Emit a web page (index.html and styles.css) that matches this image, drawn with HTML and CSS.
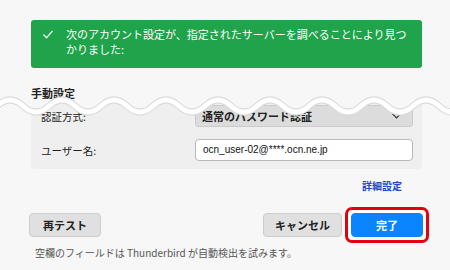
FILE: index.html
```html
<!DOCTYPE html>
<html>
<head>
  <title>アカウント設定</title>
  <link rel="stylesheet" href="styles.css">
</head>
<body>

  <div class="banner">
    <svg class="check" width="10" height="9" viewBox="0 0 10 9">
      <polyline points="0.5,4.5 3.5,7.8 9.5,0.8" fill="none" stroke="#fff" stroke-width="1.3"/>
    </svg>
    <p>次のアカウント設定が、指定されたサーバーを調べることにより見つかりました:</p>
  </div>

  <h2 class="section-title">手動設定</h2>

  <div class="lower">
    <div class="panel">
      <label>認証方式:</label>
      <div class="select">
        <span>通常のパスワード認証</span>
        <svg width="9" height="6" viewBox="0 0 9 6">
          <polyline points="0.5,0.8 4.5,4.8 8.5,0.8" fill="none" stroke="#333" stroke-width="1.2"/>
        </svg>
      </div>
      <label>ユーザー名:</label>
      <div class="text-input">ocn_user-02@****.ocn.ne.jp</div>
    </div>
  </div>

  <!-- torn edge drawn over the cut -->
  <svg class="tear" width="450" height="30" viewBox="0 0 450 30">
    <path d="M-3 16 Q10 4 23 16 T49 16 T75 16 T101 16 T127 16 T153 16 T179 16 T205 16 T231 16 T257 16 T283 16 T309 16 T335 16 T361 16 T387 16 T413 16 T439 16 T465 16" fill="none" stroke="#dadada" stroke-width="7"/>
    <path d="M-3 16 Q10 4 23 16 T49 16 T75 16 T101 16 T127 16 T153 16 T179 16 T205 16 T231 16 T257 16 T283 16 T309 16 T335 16 T361 16 T387 16 T413 16 T439 16 T465 16" fill="none" stroke="#fff" stroke-width="5"/>
  </svg>

  <div class="advanced">
    <a href="#">詳細設定</a>
  </div>

  <div class="buttons">
    <button class="btn">再テスト</button>
    <div class="spacer"></div>
    <button class="btn">キャンセル</button>
    <div class="highlight">
      <button class="btn primary">完了</button>
    </div>
  </div>

  <p class="note">空欄のフィールドは Thunderbird が自動検出を試みます。</p>

</body>
</html>
```

FILE: styles.css
```css
body {
  font-family: "Noto Sans CJK JP", "Liberation Sans", sans-serif;
  margin: 0;
  padding: 0;
  background-color: #f7f7f7;
  color: #222;
  width: 450px;
  height: 270px;
  overflow: hidden;
}

.banner {
  display: flex;
  align-items: flex-start;
  box-sizing: border-box;
  margin: 20px 28px 0 31px;
  height: 48px;
  padding: 7px 10px 0 12px;
  background-color: #1fa34b;
  border-radius: 3px;
  color: white;
}

.banner .check {
  margin-top: 3px;
  margin-right: 13px;
  flex-shrink: 0;
}

.banner p {
  margin: 0;
  font-size: 11px;
  line-height: 15px;
}

.section-title {
  margin: 18px 0 0 31px;
  font-size: 11px;
  line-height: 14px;
  font-weight: bold;
}

.lower {
  margin-top: -4px;
  background-color: #f7f7f7;
  clip-path: path('M-3 10 Q10 -2 23 10 T49 10 T75 10 T101 10 T127 10 T153 10 T179 10 T205 10 T231 10 T257 10 T283 10 T309 10 T335 10 T361 10 T387 10 T413 10 T439 10 T465 10 L465 200 L-3 200 Z');
}

.panel {
  display: grid;
  grid-template-columns: 154px 1fr;
  row-gap: 12px;
  align-items: center;
  margin: 0 28px 0 31px;
  padding: 9px 9px 8px 10px;
  background-color: #efefef;
  border-radius: 0 0 4px 4px;
}

.panel label {
  font-size: 10.5px;
  color: #222;
}

.select {
  display: flex;
  justify-content: space-between;
  align-items: center;
  box-sizing: border-box;
  height: 22px;
  padding: 0 11px 0 6px;
  background-color: #dcdcdc;
  border: 1px solid #cacaca;
  border-radius: 3px;
  font-size: 11px;
  font-weight: bold;
}

.text-input {
  box-sizing: border-box;
  height: 22px;
  padding: 0 7px;
  line-height: 20px;
  background-color: white;
  border: 1px solid #b8b8b8;
  border-radius: 4px;
  font-family: "Liberation Sans", sans-serif;
  font-size: 10px;
  color: #111;
}

.tear {
  position: absolute;
  top: 90px;
  left: 0;
}

.advanced {
  margin-top: 7px;
  padding-right: 48px;
  text-align: right;
  line-height: 14px;
}

.advanced a {
  font-size: 10px;
  font-weight: bold;
  color: #2343d0;
  text-decoration: none;
}

.buttons {
  display: flex;
  align-items: center;
  margin: 14px 21px 0 29px;
  height: 36px;
}

.spacer {
  flex: 1;
}

.btn {
  box-sizing: border-box;
  height: 24px;
  padding: 0;
  background-color: #e0e0e0;
  border: 1px solid #cdcdcd;
  border-radius: 4px;
  font-family: "Noto Sans CJK JP", sans-serif;
  font-size: 11px;
  font-weight: bold;
  color: #222;
  cursor: pointer;
}

.buttons > .btn:first-child {
  width: 72px;
}

.buttons > .btn:nth-child(3) {
  width: 79px;
  margin-right: 3px;
}

.highlight {
  display: flex;
  padding: 3px;
  background-color: white;
  border: 3px solid #e5000f;
  border-radius: 7px;
}

.btn.primary {
  width: 72px;
  background-color: #0a84ff;
  border-color: #0a84ff;
  color: white;
}

.note {
  margin: 3px 0 0 35px;
  font-size: 10px;
  line-height: 14px;
  color: #555;
}
```
